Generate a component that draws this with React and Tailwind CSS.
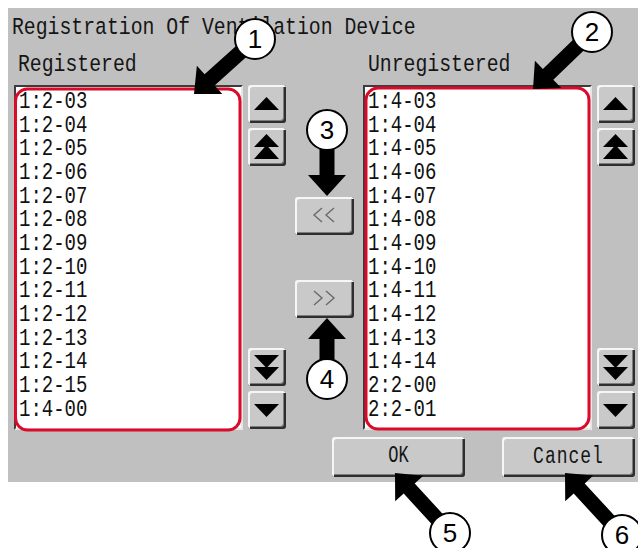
import React from 'react';

const leftItems = ['1:2-03', '1:2-04', '1:2-05', '1:2-06', '1:2-07', '1:2-08', '1:2-09', '1:2-10', '1:2-11', '1:2-12', '1:2-13', '1:2-14', '1:2-15', '1:4-00'];
const rightItems = ['1:4-03', '1:4-04', '1:4-05', '1:4-06', '1:4-07', '1:4-08', '1:4-09', '1:4-10', '1:4-11', '1:4-12', '1:4-13', '1:4-14', '2:2-00', '2:2-01'];

// callouts: circle centre -> arrow tip
const callouts = [
  { n: 1, cx: 255, cy: 39, tx: 194, ty: 94 },
  { n: 2, cx: 592, cy: 32, tx: 533, ty: 89 },
  { n: 3, cx: 327, cy: 130, tx: 327, ty: 196 },
  { n: 4, cx: 327, cy: 379, tx: 327, ty: 318 },
  { n: 5, cx: 450, cy: 533, tx: 395, ty: 473 },
  { n: 6, cx: 622, cy: 535, tx: 565, ty: 473 },
];

function arrowPoints(x1, y1, x2, y2, sw = 15, hw = 38, hl = 21) {
  const dx = x2 - x1, dy = y2 - y1;
  const len = Math.hypot(dx, dy);
  const ux = dx / len, uy = dy / len;
  const px = -uy, py = ux;
  const bx = x2 - ux * hl, by = y2 - uy * hl;
  const pts = [
    [x1 + px * sw / 2, y1 + py * sw / 2],
    [bx + px * sw / 2, by + py * sw / 2],
    [bx + px * hw / 2, by + py * hw / 2],
    [x2, y2],
    [bx - px * hw / 2, by - py * hw / 2],
    [bx - px * sw / 2, by - py * sw / 2],
    [x1 - px * sw / 2, y1 - py * sw / 2],
  ];
  return pts.map((p) => p.join(',')).join(' ');
}

function Btn({ className, children }) {
  return (
    <div className={`flex items-center justify-center rounded-[3px] bg-[#c9c9c9] shadow-[inset_2px_2px_0_#f6f6f6,inset_-2px_-2px_0_#2e2e2e,inset_-3px_-3px_0_#7c7c7c] ${className}`}>
      {children}
    </div>
  );
}

function Tri({ kind }) {
  return (
    <svg width="38" height="38" viewBox="0 0 38 38">
      {kind === 'up' && <polygon points="6,25 31,25 18.5,12" fill="#000" />}
      {kind === 'top' && (
        <>
          <polygon points="6,19 31,19 18.5,6" fill="#000" />
          <polygon points="6,31 31,31 18.5,17" fill="#000" />
        </>
      )}
      {kind === 'bottom' && (
        <>
          <polygon points="6,7 31,7 18.5,20" fill="#000" />
          <polygon points="6,19 31,19 18.5,32" fill="#000" />
        </>
      )}
      {kind === 'down' && <polygon points="6,13 31,13 18.5,26" fill="#000" />}
    </svg>
  );
}

function ScrollCol() {
  return (
    <div className="flex h-[345px] w-[38px] flex-col justify-between pb-px">
      <div className="flex flex-col gap-[5px]">
        <Btn className="h-[38px] w-[38px]"><Tri kind="up" /></Btn>
        <Btn className="h-[38px] w-[38px]"><Tri kind="top" /></Btn>
      </div>
      <div className="flex flex-col gap-[5px]">
        <Btn className="h-[38px] w-[38px]"><Tri kind="bottom" /></Btn>
        <Btn className="h-[38px] w-[38px]"><Tri kind="down" /></Btn>
      </div>
    </div>
  );
}

function ListBox({ items }) {
  return (
    <div className="h-[345px] w-[229px] overflow-hidden border-2 border-t-[#3c3c3c] border-l-[#3c3c3c] border-b-[#e6e6e6] border-r-[#e6e6e6] bg-white pl-[3px] pt-[3px]">
      {items.map((it) => (
        <div key={it} className="flex h-[23.7px] items-center">
          <span className="inline-block scale-y-125 text-[19px] leading-[18px] text-[#111]">{it}</span>
        </div>
      ))}
    </div>
  );
}

function Chevrons({ dir }) {
  return (
    <svg width="24" height="16" viewBox="0 0 24 16" fill="none" stroke="#6a6a6a" strokeWidth="1.4">
      {dir === 'left' ? (
        <>
          <polyline points="10,1 2,8 10,15" />
          <polyline points="22,1 14,8 22,15" />
        </>
      ) : (
        <>
          <polyline points="2,1 10,8 2,15" />
          <polyline points="14,1 22,8 14,15" />
        </>
      )}
    </svg>
  );
}

export default function App() {
  return (
    <div className="relative h-[548px] w-[638px] overflow-hidden bg-white pl-2 pt-2 font-['Liberation_Mono','DejaVu_Sans_Mono',monospace] text-[#151515]">
      <div className="flex h-[474px] w-[630px] flex-col bg-[#c0c0c0]">
        <div className="flex h-[34px] items-center pl-[4px] pt-[5px]">
          <span className="inline-block scale-y-[1.2] text-[19.8px] leading-5">Registration Of Ventilation Device</span>
        </div>

        <div className="flex h-[43px] items-end pb-[10px]">
          <span className="ml-[10px] inline-block w-[350px] scale-y-[1.2] text-[19.8px] leading-5">Registered</span>
          <span className="inline-block scale-y-[1.2] text-[19.8px] leading-5">Unregistered</span>
        </div>

        <div className="flex h-[345px] pl-[6px]">
          <ListBox items={leftItems} />
          <div className="ml-[5px]"><ScrollCol /></div>
          <div className="ml-[9px] flex w-[59px] flex-col pt-[112px]">
            <Btn className="h-[38px] w-[59px] pb-[3px] pr-[2px]"><Chevrons dir="left" /></Btn>
            <Btn className="mt-[45px] h-[38px] w-[59px] pb-[3px] pr-[2px]"><Chevrons dir="right" /></Btn>
          </div>
          <div className="ml-[9px]"><ListBox items={rightItems} /></div>
          <div className="ml-[5px]"><ScrollCol /></div>
        </div>

        <div className="mt-[7px] flex gap-[37px] pl-[324px]">
          <Btn className="h-[40px] w-[133px] pb-[2px]">
            <span className="inline-block scale-y-[1.4] text-[17px] leading-5">OK</span>
          </Btn>
          <Btn className="h-[40px] w-[133px] pb-[2px]">
            <span className="inline-block scale-y-[1.35] text-[18px] leading-5 tracking-[1px]">Cancel</span>
          </Btn>
        </div>
      </div>

      <svg className="pointer-events-none absolute inset-0" width="638" height="548" viewBox="0 0 638 548">
        <rect x="15.5" y="89" width="224.5" height="341" rx="12" fill="none" stroke="#dc0a2a" strokeWidth="3" />
        <rect x="366" y="88" width="223" height="341" rx="12" fill="none" stroke="#dc0a2a" strokeWidth="3" />
        {callouts.map((c) => (
          <polygon key={`a${c.n}`} points={arrowPoints(c.cx, c.cy, c.tx, c.ty)} fill="#000" />
        ))}
        {callouts.map((c) => (
          <g key={`c${c.n}`}>
            <circle cx={c.cx} cy={c.cy} r="20" fill="#fff" stroke="#000" strokeWidth="2" />
            <text x={c.cx} y={c.cy + 9} textAnchor="middle" fontSize="26" fontFamily="Liberation Sans, Arial, sans-serif" fill="#000">
              {c.n}
            </text>
          </g>
        ))}
      </svg>
    </div>
  );
}
